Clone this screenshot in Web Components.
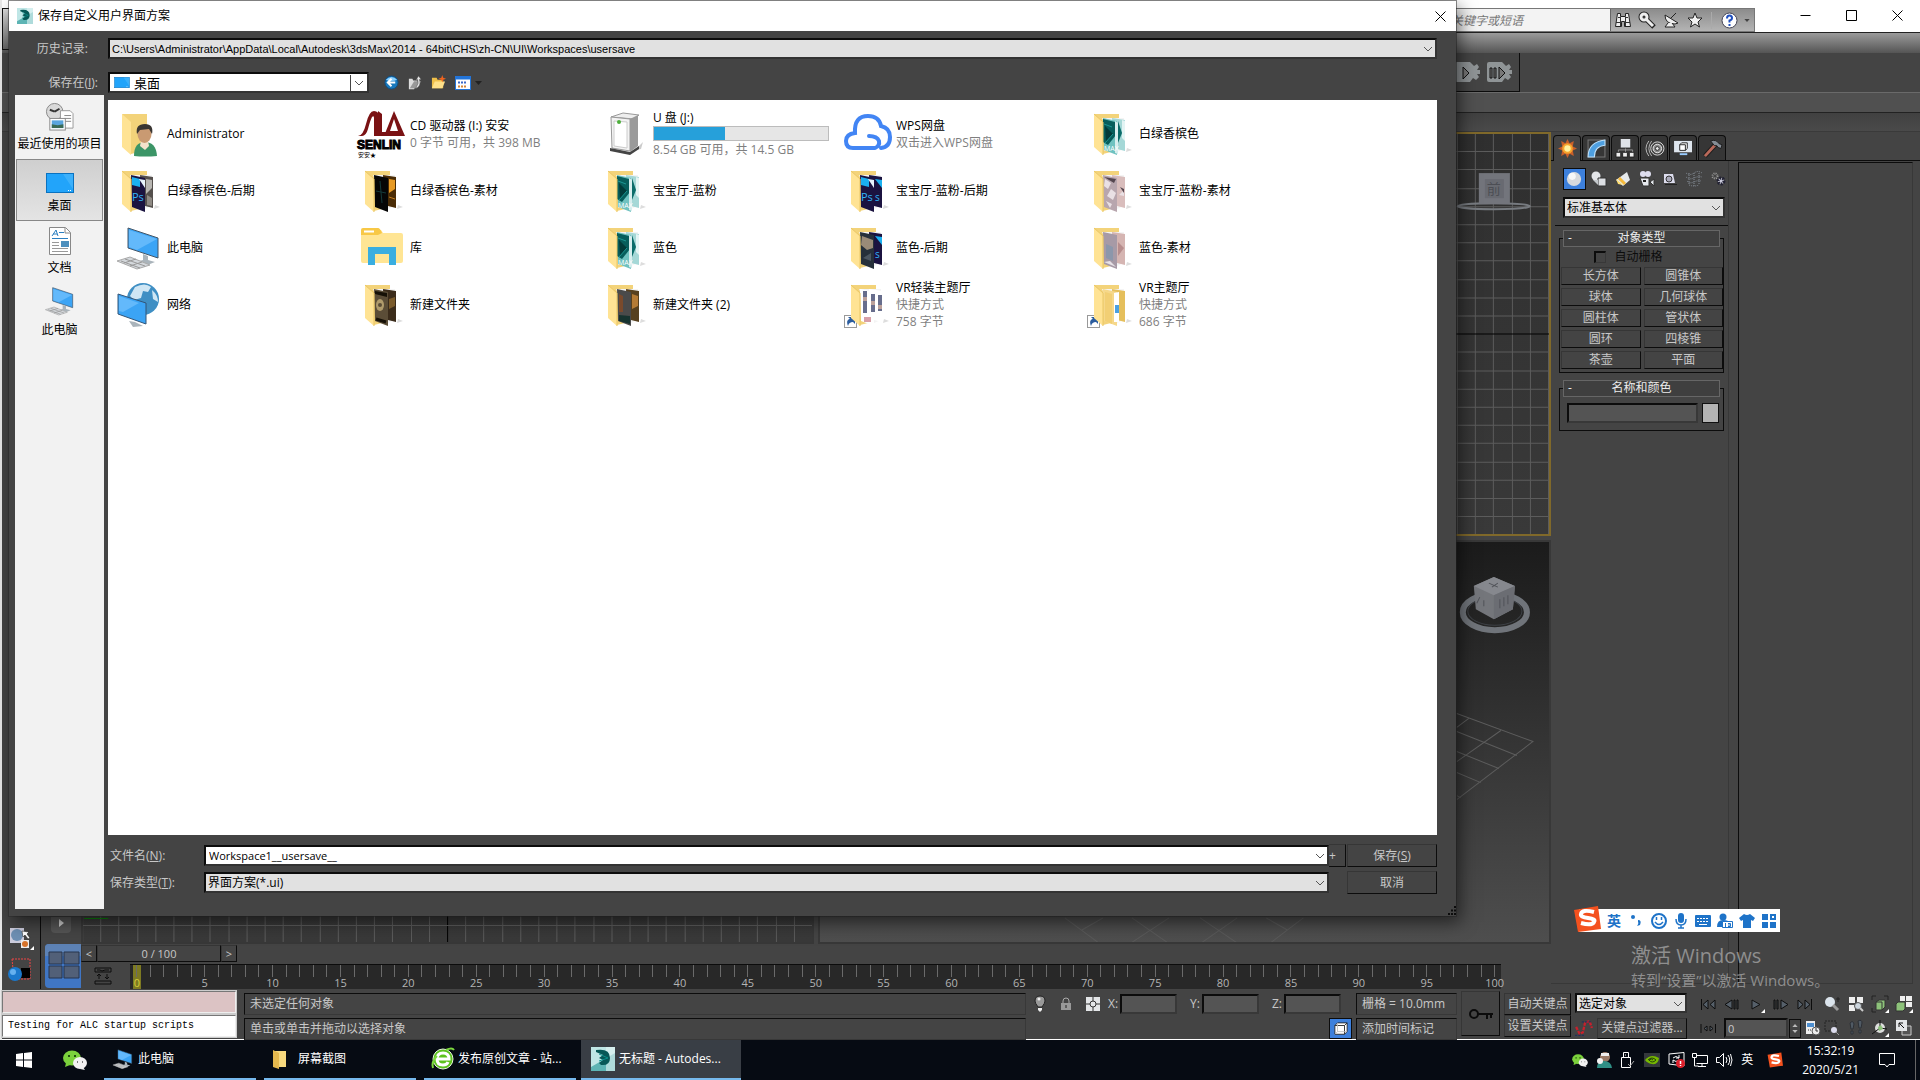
<!DOCTYPE html>
<html lang="zh-CN">
<head>
<meta charset="utf-8">
<title>保存自定义用户界面方案</title>
<style>
  html, body { margin: 0; height: 100%; }
  body {
    font: 12px/16px "Open Sans", "Noto Sans CJK SC", sans-serif;
    color: #c8c8c8; background: #444; overflow: hidden;
  }
</style>
</head>
<body>
<desk-top></desk-top>

<script>
// ---------------------------------------------------------------- icons
/** A folder with two sheets; `front` and `back` are fills, `extra` is drawn on the sheets. */
function folder(front, back, extra = '') {
  return [48, 48, `<path d="M7 4H32V40L16 44Z" fill="#f3d37a"/>
    <path d="M40 38l5 2-6 2z" fill="#ddd"/>
    <path d="M15 8L37 8V39L30 42Z" fill="#f4f4f4"/>
    <path d="M25 8L38 10V41L26 38Z" fill="${back}"/>
    <path d="M16 8L30 11V45L17 40Z" fill="${front}"/>${extra}
    <path d="M7 4L16 12V45L7 37Z" fill="#ffe394"/>
    <path d="M7 4L16 12V45" fill="none" stroke="#eac767"/>`];
}
const maxSheets = folder('#6fc2c0', '#a5d8d7', `<path d="M16 9l12 3 1 13-8 10-5-3z" fill="#075e5c"/>
  <path d="M31 11l4 12-4 10z" fill="#0b6c6a"/><path d="M18 16l8 8-7 8z" fill="#023b3a"/><path d="M17 14l8 3M18 33l8-9" stroke="#1d9794"/>
  <path d="M28 11l3 2v31l-3-1z" fill="#d7eeee"/><path d="M35 10l3 1v20l-3-3z" fill="#e3f4f4"/>
  <text x="17" y="41" font-size="7" fill="#fff" font-family="Open Sans">MAX</text>`);
const psText = `<path d="M17 10l8 2v8l-8-2z" fill="#1bb0f0"/><path d="M24 12l6 1v8z" fill="#e8f4fb"/>
  <text x="17" y="34" font-size="11" fill="#31b6f7" font-family="Open Sans">Ps</text>`;
const shortcut = `<rect x="0.5" y="34.500" width="12" height="12" fill="#fff" stroke="#999"/>
  <path d="M4 45c-2-5 0-7 2-7l-2-2h7v7l-2-2c-3 0-4 1-5 4z" fill="#2b5c9e"/>`;
const monitor = `<path d="M13 4l30 10v20l-30-10z" fill="#3ba4f5" stroke="#456"/><path d="M14 6l28 9-20 11-8-3z" fill="#63b9fb"/>
  <path d="M28 30l5 2v4l7 2-10 4-10-4 8-2z" fill="#aab4bb"/>
  <path d="M2 37l13-4 20 8-13 4z" fill="#d4d8dc" stroke="#aaa"/><path d="M6 37l19 7M10 35l20 7M9 39l12-4M15 42l12-4" stroke="#999"/>`;
const gear = '<path d="M2 2h13l4 4 3-2 2 3-2 3h3v4h-3l2 3-3 3-3-2-3 4H2q-2 0-2-2V4q0-2 2-2z" fill="#8f9496"/>';

const ICONS = {
  max: [24, 24, `<rect width="24" height="24" fill="#5db4b4"/><path d="M0 0h24v6L0 20z" fill="#bfe6e6"/><path d="M15 0h9v24h-9z" fill="#e4f5f5" opacity=".6"/>
    <path d="M5 3q14-2 14 8 0 8-9 7l-2-2 4-3-4-2 4-3-7-3z" fill="#075857"/><path d="M8 7l9 4-9 3" stroke="#0b8e8a" fill="none"/>`],
  close: [11, 11, '<path d="M.5.5l10 10M10.500.5l-10 10" stroke="currentColor" fill="none"/>'],
  min: [11, 11, '<path d="M.5 5.500h10" stroke="currentColor"/>'],
  box: [11, 11, '<path d="M.5.5h10v10H.5z" stroke="currentColor" fill="none"/>'],
  chev: [10, 6, '<path d="M1 1l4 4 4-4" stroke="#555" fill="none"/>'],
  desktop: [28, 20, '<rect x=".5" y=".5" width="27" height="19" fill="#22a4fa" stroke="#0a72c0"/><path d="M17 1h10v15z" fill="#4db9fc" opacity=".6"/><path d="M22 17.500h4" stroke="#fff" stroke-dasharray="1 1"/>'],
  recent: [30, 30, `<circle cx="10" cy="10" r="8.500" fill="#d9d9d9" stroke="#888"/><path d="M10 10l5-3M10 10l-5-2" stroke="#333" stroke-width="2"/>
    <path d="M16 9h10l3 3v15H16z" fill="#fff" stroke="#999"/><path d="M20 14h7M20 17h7M20 20h7" stroke="#888"/>
    <rect x="5" y="17" width="16" height="12" fill="#fff" stroke="#888"/><rect x="7" y="19" width="12" height="8" fill="#5aa5dd"/><path d="M7 27v-4l6 1 6-1v4z" fill="#3b6b55"/>`],
  docs: [24, 28, `<path d="M1.500.5h16l5 5v22h-21z" fill="#fff" stroke="#888"/><path d="M17 1v5h5" fill="none" stroke="#888"/>
    <path d="M4 9l4-6 2 6M5 7h4M11 5.500h5M4 11.500h16" stroke="#2a7ec0" fill="none"/><path d="M4 15.500h7M4 18.500h7M4 21.500h16M4 24.500h16" stroke="#999"/><rect x="13" y="14" width="8" height="6" fill="#4d8fbd"/>`],
  pc: [48, 48, monitor],
  back: [16, 16, '<circle cx="8" cy="8" r="7" fill="#1879bd" stroke="#114d80"/><path d="M2 5q6-6 12 0-6 3-12 0" fill="#8cd1ff"/><path d="M12 8H5M8 4L4 8l4 4" stroke="#fff" stroke-width="2" fill="none"/>'],
  up: [16, 16, '<path d="M1 3h4l1 2h5l-4 10H1z" fill="#ddd"/><path d="M2 14l5-8h8l-5 8z" fill="#999"/><path d="M9 13q4-4 2-9l-2 1 3-5 3 4h-2q2 6-2 9z" fill="#e8e8e8" stroke="#555" stroke-width=".5"/>'],
  newdir: [16, 16, '<path d="M1 3h5l1 2h6v9H1z" fill="#f0c04a"/><path d="M1 14l3-7h11l-3 7z" fill="#ffe18a"/><path d="M12 0l1 3 3 1-3 1-1 3-1-3-3-1 3-1z" fill="#f2641e"/>'],
  views: [16, 14, '<rect x=".5" y=".5" width="15" height="13" fill="#fff" stroke="#2374d8"/><path d="M1 2h14" stroke="#2374d8" stroke-width="3"/><path d="M3 6.500h2m1 0h2m1 0h2" stroke="#3c68c8" stroke-width="2"/><path d="M3 10.500h2m1 0h2m1 0h2" stroke="#d28436" stroke-width="2"/>'],
  down: [7, 4, '<path d="M0 0h7L3.500 4z" fill="currentColor"/>'],
  user: [48, 48, `<path d="M7 4H32V40L16 44Z" fill="#f3d37a"/><path d="M7 4L16 12V45L7 37Z" fill="#ffe394"/>
    <path d="M19 46q0-14 11-14t12 14q-12 1-23 0z" fill="#3c9567"/><path d="M26 31h7l1 5-4 4-5-4z" fill="#f3e2cb"/><ellipse cx="29.500" cy="24" rx="7" ry="9" fill="#c99a72"/><path d="M22 24q-2-10 8-10 9 0 7 10l-3-5-9 1z" fill="#3a3632"/>`],
  senlin: [48, 48, `<path d="M0 26q5 0 8-12Q11 1 16 1t5 6v19h-5V8q0-3-2-1-2 4-4 12-2 7-6 7z" fill="#7a1214"/><path d="M24 4v18h8v4H20V1z" fill="#7a1214"/><path d="M36 1L47 26H26L36 1zM36 9l-4 12h8z" fill="#7a1214" fill-rule="evenodd"/>
    <text x="-1" y="39" font-size="12" font-weight="900" stroke="#000" fill="#000" font-family="Liberation Sans">SENLIN</text><text x="0" y="47" font-size="6" fill="#000" font-family="Noto Sans CJK SC">安安★</text>`],
  drive: [48, 48, `<path d="M34 40l8-8-2 7z" fill="#ccc"/><path d="M10 7l12-4 16 2-5 4z" fill="#eee" stroke="#999"/><path d="M10 7l19 2v32l-18-3z" fill="#f3f3f3" stroke="#999"/><path d="M29 9l8-4v31l-8 6z" fill="#9a9a9a"/><path d="M13 11l13 1v26l-13-2z" fill="#fff" stroke="#ccc"/><path d="M9 38l20 4 9-6v3l-9 6-20-4z" fill="#444"/><circle cx="18" cy="12" r="2" fill="#4caf3a"/>`],
  wps: [48, 48, `<path d="M31 38H9Q2 38 2 31t9-8Q10 6 24 6q11 0 13 10 9 2 9 11 0 10-9 11M25 26q8 0 10 5 1 5-4 7" fill="none" stroke="#4285f4" stroke-width="4" stroke-linecap="round"/>`],
  maxdir: maxSheets,
  psdir: folder('#1b1340', '#55504d', psText + '<path d="M31 12l6 1v8l-6 6z" fill="#b8b6b2"/><path d="M32 28l5 3v8l-5-1z" fill="#8f8a84"/>'),
  psdir2: folder('#1b1340', '#1b1340', psText + '<path d="M31 12l7 1v8z" fill="#1bb0f0"/><text x="31" y="34" font-size="10" fill="#31b6f7" font-family="Open Sans">s</text>'),
  photops: folder('#26303a', '#1b1340', '<path d="M18 12l11 4v8l-6 2-6-5z" fill="#9a8b78"/><path d="M19 34l8-5v8z" fill="#4b5661"/><path d="M31 12l7 1v8z" fill="#1bb0f0"/><text x="31" y="34" font-size="10" fill="#31b6f7" font-family="Open Sans">s</text>'),
  blackdir: folder('#060606', '#4a2c06', '<path d="M31 12l6 1v9l-6 4z" fill="#e79a24"/><path d="M31 30l6 2" stroke="#c07a1c"/><path d="M18 24l10 2M22 14l2 22" stroke="#143a3a"/>'),
  pinkdir: folder('#b8a6ae', '#d9bdbc', '<path d="M18 12l6 4-3 6-4-3zM24 22l5 4-3 7-6-4zM32 28l5-5v6zM19 34l6 3-2 4z" fill="#e9e0e4"/><path d="M17 10l12 2-2 4zM33 20l4 2v4z" fill="#54464f"/>'),
  pinkdir2: folder('#a79aa6', '#d5b5b2', '<path d="M19 20l7 3v14l-7-3z" fill="#8c97ab"/><path d="M17 38l6-1 6 6z" fill="#e6e1e6"/><path d="M31 18l6 6-6 8z" fill="#b78d8d"/>'),
  browndir: folder('#5b4d37', '#3b2c1b', '<path d="M17 10l12 2v4l-12-3z" fill="#151006"/><ellipse cx="22" cy="24" rx="4" ry="6" fill="#b09b6c"/><circle cx="22" cy="24" r="2" fill="#5b4d37"/><path d="M31 18l6-2v9l-6 3z" fill="#7a5b2c"/><path d="M18 38l10 3" stroke="#151006" stroke-width="3"/>'),
  greydir: folder('#4a4a4a', '#57401f', '<path d="M18 13l4 2v16h-4z" fill="#7a4a2c"/><path d="M31 13l6 2v10l-6 3z" fill="#b57b35"/><path d="M18 34l11 1v8l-11-3z" fill="#16332f"/>'),
  cards: folder('#fff', '#fff', '<path d="M19 10h4v22h-4zM27 13h4v18h-4zM34 14h4v16h-4z" fill="#676d8c"/><path d="M19 16h4v4h-4zM27 20h4v4h-4zM34 24h4v4h-4z" fill="#bba09a"/><path d="M20 36h7v5h-7z" fill="#d8a0a8"/>' + shortcut),
  nested: folder('#f6d88a', '#e5bf5c', '<path d="M27 12l5-1v30h-5z" fill="#fff"/><path d="M28 24h4v8h-4z" fill="#4ba0e0"/><path d="M18 11l7 2v30l-7-3z" fill="#f2cf74"/>' + shortcut),
  lib: [48, 48, '<path d="M3 6h20l2 3h18q2 0 2 2v26q0 2-2 2H5q-2 0-2-2z" fill="#ffe594"/><path d="M3 6q0-2 2-2h15q2 0 4 5l-4 2H3z" fill="#f8c846"/><path d="M10 41V23h28v18h-7V30H17v11z" fill="#3aaee0"/><path d="M6 7.500h10" stroke="#fff" stroke-width="2"/>'],
  net: [48, 48, `<circle cx="28" cy="18" r="16" fill="#3f8fc4"/><path d="M20 6q10-5 16 0l-3 5-5-1-2 7-7 2-4-4zM37 9q6 5 6 12l-5-3z" fill="#cfe6f4"/><path d="M3 13l28 9v21L3 33z" fill="#3ba4f5" stroke="#357"/><path d="M4 15l20 7-16 9-4-1z" fill="#63b9fb"/><path d="M14 40l6 1 8 4-10 1z" fill="#aab4bb"/>`],
  // main window
  binoc: [16, 16, '<path d="M2.500 1.500h3v3h5v-3h3l2 13h-6v-5h-3v5h-6z" fill="#eee" stroke="#222"/><path d="M1 10.500h6M9 10.500h6M3 5.500h3M10 5.500h3M5.500 5v9M10.500 5v9" stroke="#333"/>'],
  key: [16, 16, '<circle cx="5" cy="5" r="3" fill="none" stroke="#222" stroke-width="5"/><path d="M7 7l8 8" stroke="#222" stroke-width="5"/><circle cx="5" cy="5" r="3" fill="none" stroke="#eee" stroke-width="3"/><path d="M7 7l7 7" stroke="#eee" stroke-width="3"/>'],
  dish: [16, 16, '<path d="M2 3q0 9 10 9l3-1z" fill="#eee" stroke="#222"/><path d="M8 6l5-5M5 11l-3 4h10l-3-4" stroke="#222" fill="#eee"/>'],
  star: [16, 16, '<path d="M8 1l2 5h5l-4 4 1.500 5L8 12l-4.500 3L5 10 1 6h5z" fill="#f2f2f2" stroke="#222"/>'],
  help: [17, 17, '<circle cx="8.500" cy="8.500" r="7.500" fill="#fff" stroke="#445"/><path d="M6 6.500q0-3 2.500-3t2.500 2.500q0 2-2.500 2.500v2M8.500 12v2" stroke="#1f4fc0" stroke-width="2" fill="none"/>'],
  render: [24, 24, gear + '<path d="M8 7v12l6-6z" fill="#777" stroke="#111"/>'],
  render2: [24, 24, gear + '<path d="M3 8h2v10H3zM7 8h2v10H7zM12 7v12l6-6z" fill="#777" stroke="#111"/>'],
  create: [18, 18, '<path d="M9 0l2 4 4-2-1 5 4 2-4 2 1 5-4-2-2 4-2-4-4 2 1-5-4-2 4-2-1-5 4 2z" fill="#c9602a"/><circle cx="9" cy="9" r="5" fill="#f6a52c"/><circle cx="9" cy="9" r="3" fill="#fff3a0"/>'],
  modify: [18, 18, '<path d="M1 1h16v16H1z" fill="none" stroke="#777"/><path d="M1 17Q1 3 17 1v5Q7 7 7 17z" fill="#4e9fe0" stroke="#bde0fa"/>'],
  hier: [20, 20, '<path d="M5 0h10v9H5z" fill="#dfe3e8"/><path d="M2.500 14v-2.500h15V14M10 10v4" stroke="#999" fill="none"/><path d="M0 14h5v5H0zM7 14h5v5H7zM14 14h5v5h-5z" fill="#eee" stroke="#222"/>'],
  motion: [20, 18, '<path d="M4 1q-6 8 0 16M7 1q-6 8 0 16" fill="none" stroke="#bbb"/><circle cx="13" cy="9" r="7" fill="#444" stroke="#ddd"/><circle cx="13" cy="9" r="4.500" fill="#888" stroke="#eee"/><circle cx="13" cy="9" r="2" fill="#eee" stroke="#222"/>'],
  display: [20, 18, '<path d="M0 1h19v12H0z" fill="#dfe6ee"/><path d="M6 5h6v6H6zM6 5l2-2h6v6l-2 2" fill="#fff" stroke="#222"/><path d="M6 15h8" stroke="#9cf" stroke-width="2"/>'],
  hammer: [20, 20, '<path d="M2 18L13 6" stroke="#1c1c1c" stroke-width="5"/><path d="M2 18L13 6" stroke="#b9695a" stroke-width="3"/><path d="M8 2q6-2 9 3l3 1-1 4-3-1q-1-3-4-2z" fill="#848c94" stroke="#1c1c1c"/>'],
  sphere: [18, 18, '<circle cx="9" cy="9" r="8" fill="#d7dadd"/><circle cx="7" cy="6" r="4" fill="#fff" opacity=".8"/>'],
  shapes: [16, 16, '<circle cx="5" cy="5" r="4.500" fill="#e4e6e9"/><path d="M7 7h8v8H7z" fill="#dcdfe3" stroke="#333"/><path d="M2 9h5v5z" fill="#c4c8cc"/>'],
  light: [16, 16, '<path d="M1 9L12 1l3 8-7 6z" fill="#e6e9ec"/><path d="M1 8l7 6-5-1z" fill="#ffdf70"/><path d="M4 7l6 6" stroke="#f5b93a" stroke-width="3"/>'],
  camera: [16, 16, '<circle cx="4" cy="3" r="3" fill="#dde"/><circle cx="9" cy="3" r="3" fill="#dde"/><path d="M1 7h9v8H4zM11 11l4-3v7z" fill="#e6e9ee" stroke="#333"/><path d="M4 10h3" stroke="#222" stroke-width="2"/>'],
  helper: [16, 16, '<path d="M2 3h9l2 9H2z" fill="#dde"/><circle cx="7" cy="8" r="3" fill="#aab" stroke="#333"/><path d="M3 13.500h12" stroke="#222"/>'],
  warp: [16, 16, '<path d="M0 2q4 3 8 0t8 0M0 6q4 3 8 1t8-1M1 10q3 3 7 1t7-1M3 14q5 2 10 0M3 2v11M8 2v13M13 2v11" fill="none" stroke="#858d96" stroke-dasharray="1 1"/>'],
  gears: [16, 16, '<circle cx="5" cy="5" r="2.500" fill="none" stroke="#999" stroke-width="2" stroke-dasharray="1 1"/><circle cx="11" cy="10" r="3" fill="#ccd" stroke="#223" stroke-width="3" stroke-dasharray="2 1"/>'],
  // bottom rows
  layout: [36, 44, '<path d="M0 4q0-4 4-4h32v44H4q-4 0-4-4z" fill="#4076c4"/><path d="M0 4q0-4 4-4h32v12H0z" fill="#5d82b5"/><path d="M4 8h13v12H4zM19 8h15v12H19zM4 22h13v12H4zM19 22h15v12H19z" fill="#526078" stroke="#26344c"/>'],
  play: [20, 16, '<path d="M0 0h20v12q0 4-4 4H4q-4 0-4-4z" fill="#555"/><path d="M8 2v8l5-4z" fill="#ccc"/>'],
  selobj: [26, 24, '<path d="M2 1h14v15H2z" fill="#ccd"/><circle cx="9" cy="8" r="6" fill="#6d8fb3"/><path d="M14 4l7 1-2 2 3 4-2 1-3-4-2 2z" fill="#fff" stroke="#111" stroke-width=".5"/><path d="M13 13h8v8h-8z" fill="#eee"/><circle cx="17" cy="17" r="3" fill="#d9742b"/><path d="M26 19v4h-4z" fill="#fff"/>'],
  ball: [26, 24, '<path d="M4 1h18v20H6z" fill="none" stroke="#e44" stroke-dasharray="2 1"/><path d="M13 10h9v10h-9z" fill="#000"/><circle cx="7" cy="16" r="7" fill="#1b78cc"/><circle cx="5" cy="14" r="3" fill="#65b0ef"/>'],
  curve: [18, 18, '<path d="M1 1h16v4H1zM1 14h16v3H1z" fill="none" stroke="#0c0c0c"/><path d="M3 3h3l2 1 3-1h4M5 12V7M3 9l2-2 2 2M13 7v5M11 10l2 2 2-2" fill="none" stroke="#0c0c0c"/>'],
  bulb: [12, 18, '<path d="M6 1q5 0 5 5 0 2-3 6H4Q1 8 1 6q0-5 5-5z" fill="#999" stroke="#222"/><path d="M4 13h4v2l-2 2-2-2z" fill="#eee"/><circle cx="5" cy="4" r="1.500" fill="#eee"/>'],
  lock: [12, 14, '<path d="M3 7V4q0-3 3-3t3 3v3" fill="none" stroke="#aaa"/><path d="M1 6h10v7H1z" fill="#999"/><path d="M6 8v3" stroke="#222"/>'],
  iso: [14, 14, '<path d="M0 0h14v14H0z" fill="#e4e6e8"/><circle cx="7" cy="7" r="3" fill="none" stroke="#333"/><path d="M7 0v4M7 10v4M0 7h4M10 7h4" stroke="#333"/>'],
  cube: [16, 16, '<path d="M1 4l3-3h11v10l-3 3H1z" fill="#fff" stroke="#222"/><path d="M1 4h11v10M12 4l3-3" stroke="#222" fill="none"/><path d="M4 1v10h11M4 11l-3 3" stroke="#bbb" fill="none"/>'],
  bigkey: [24, 12, '<circle cx="5" cy="6" r="4" fill="none" stroke="#0b0b0b" stroke-width="2"/><path d="M9 5h15v2H9zM17 6h2v5h-2zM21 6h2v4h-2z" fill="#0b0b0b"/>'],
  rw: [17, 11, '<path d="M1.500 0v11M8 1L3 5.500 8 10zM15 1l-5 4.500 5 4.500z" fill="#56606a" stroke="#0c0c0c"/>'],
  ff: [17, 11, '<path d="M15.500 0v11M9 1l5 4.500L9 10zM2 1l5 4.500L2 10z" fill="#56606a" stroke="#0c0c0c"/>'],
  prev: [17, 11, '<path d="M8 1L1 5.500 8 10zM10 1v9h1V1zM13 1v9h1V1z" fill="#56606a" stroke="#0c0c0c"/>'],
  next: [17, 11, '<path d="M9 1l7 4.500L9 10zM2 1v9h1V1zM5 1v9h1V1z" fill="#56606a" stroke="#0c0c0c"/>'],
  run: [17, 11, '<path d="M4 1l8 4.500L4 10z" fill="#56606a" stroke="#111"/><path d="M17 10v4h-4z" fill="#fff"/>'],
  keymode: [17, 11, '<path d="M1 1v9M7 3L4 5.500 7 8zM10 3l3 2.500L10 8zM15.500 1v9" fill="#56606a" stroke="#0c0c0c"/>'],
  setkey: [16, 16, '<path d="M1 7l3 6 3-1 2-9 4-1 2 6" fill="none" stroke="#c8202c" stroke-width="2" stroke-dasharray="3 1"/><path d="M6 2.500h9M0 14.500h9" stroke="#24305a" stroke-dasharray="2 1"/>'],
  zoom: [16, 16, '<circle cx="6" cy="6" r="5" fill="#dbe4ec"/><path d="M9 9l5 5" stroke="#999" stroke-width="3"/><path d="M14 1v5M12 3h4" stroke="#222"/>'],
  zoomall: [16, 16, '<path d="M1 1h6v6H1zM9 1h6v6H9zM1 9h6v6H1z" fill="#eee"/><circle cx="10" cy="10" r="3.500" fill="#cdd6de" stroke="#555"/><path d="M12 12l3 3" stroke="#ccc" stroke-width="2"/>'],
  ext: [16, 16, '<path d="M0 4V0h4M12 0h4v4M0 12v4h4" fill="none" stroke="#222"/><path d="M4 6l3-2h6v7l-3 3H4z" fill="#8dc27a" stroke="#333"/><path d="M4 6h6v8" fill="none" stroke="#333"/><path d="M17 13v4h-4z" fill="#fff"/>'],
  extall: [16, 16, '<path d="M4 0h5v5H4zM10 0h6v5h-6zM10 6h6v5h-6z" fill="#eee"/><path d="M0 8l2-2h7v7l-2 2H0z" fill="#8dc27a" stroke="#333"/><path d="M17 13v4h-4z" fill="#fff"/>'],
  timecfg: [16, 16, '<path d="M1 1h9v13H1z" fill="#eee"/><path d="M2 3h7v4H2z" fill="#4e8fd0"/><path d="M3 10h1m1 0h1m1 0h1" stroke="#333"/><circle cx="11" cy="11" r="4" fill="#eee" stroke="#555"/><path d="M11 8v3h2" stroke="#333" fill="none"/>'],
  region: [16, 16, '<path d="M1 1h11v10H1z" fill="none" stroke="#222" stroke-dasharray="2 1"/><circle cx="10" cy="10" r="3" fill="#dde"/><path d="M12 12l3 3" stroke="#999"/>'],
  walk: [16, 16, '<path d="M2 3q3-3 4 1l-1 5H3zM3 11h2v3H3zM10 1q4-2 4 2l-1 5h-2zM11 10h2v3h-2z" fill="#505a64" stroke="#2c3036"/>'],
  orbit: [16, 16, '<circle cx="8" cy="8" r="5" fill="#ddd"/><path d="M8 8V0M8 8l7 1M8 8l-8 6" stroke="#111"/><path d="M6 7l3-2 2 4-4 2z" fill="#8dc27a"/><path d="M17 13v4h-4z" fill="#fff"/>'],
  maximize: [16, 16, '<path d="M6 6h9v9H6z" fill="#555" stroke="#ccc"/><path d="M0 0h11v11H0z" fill="#e4e6e8"/><path d="M3 3l5 5M3 7V3h4" stroke="#111" fill="none"/>'],
  // ime bar and task bar
  sogou: [28, 28, '<path d="M1 5L25 1l3 23L5 27z" fill="#f4511e"/><path d="M21 7q-12-3-13 2-1 3 7 4t6 4q-2 4-13 1" fill="none" stroke="#fff" stroke-width="4"/>'],
  punct: [16, 16, '<circle cx="4" cy="4" r="2" fill="#1e73c8"/><path d="M9 7q4 0 2 5l-3 1q2-3 1-4z" fill="#1e73c8"/>'],
  smile: [16, 16, '<circle cx="8" cy="8" r="7" fill="none" stroke="#1e73c8" stroke-width="2"/><path d="M5.500 4v3M10.500 4v3M4 9q4 5 8 0" fill="none" stroke="#1e73c8" stroke-width="1.500"/>'],
  mic: [16, 16, '<rect x="5" y="0" width="6" height="10" rx="3" fill="#1e73c8"/><path d="M3 6q0 6 5 6t5-6M8 12v3M5 15h6" fill="none" stroke="#1e73c8" stroke-width="1.500"/>'],
  kbd: [16, 16, '<rect x="0" y="2" width="16" height="12" rx="1" fill="#1e73c8"/><path d="M2 5.500h12M2 8.500h12" stroke="#fff" stroke-dasharray="2 1"/><path d="M4 11.500h8" stroke="#fff"/>'],
  person: [16, 16, '<circle cx="6" cy="4" r="3.500" fill="#1e73c8"/><path d="M0 14q0-7 6-7t6 3v4z" fill="#1e73c8"/><path d="M5.500 8.500h10v6h-10z" fill="#fff" stroke="#1e73c8"/><path d="M8.500 10v4M11 10.500h2.500v3H11M11 12h2" stroke="#1e73c8" fill="none"/>'],
  shirt: [16, 16, '<path d="M5 1q3 2 6 0l5 4-2 3-2-1v8H4V7L2 8 0 5z" fill="#1e73c8"/>'],
  tiles: [16, 16, '<path d="M1 1h6v6H1zM1 9h6v6H1zM9 9h6v6H9z" fill="#1e73c8"/><path d="M10 2h4v4h-4z" fill="none" stroke="#1e73c8" stroke-width="2"/>'],
  win: [16, 16, '<path d="M0 2l7-1v6.500H0zM8 1l8-1v7.500H8zM0 8.500h7V15l-7-1zM8 8.500h8V16l-8-1z" fill="#fff"/>'],
  wechat: [24, 20, '<ellipse cx="9" cy="8" rx="9" ry="7.500" fill="#7bd13c"/><path d="M3 13l-1 4 5-2z" fill="#7bd13c"/><ellipse cx="17" cy="13" rx="7" ry="6" fill="#f2f2f2"/><path d="M20 17l2 3-5-1z" fill="#f2f2f2"/><path d="M5 6h2M11 6h2" stroke="#214d10" stroke-width="2"/><path d="M14 12h1M19 12h1" stroke="#555" stroke-width="1.500"/>'],
  taskdir: [16, 20, '<path d="M1 2h13v16H1z" fill="#f7d97e"/><path d="M1 1l6 3v16l-6-2z" fill="#e5b94e"/>'],
  browser: [22, 22, '<circle cx="11" cy="11" r="10" fill="#5dc21e" stroke="#e9f7de"/><path d="M6 11h11q0-6-6-6t-6 6 6 6q4 0 5-3" fill="none" stroke="#fff" stroke-width="3"/><path d="M1 20q-2-6 4-12M14 2q6-3 8 0" stroke="#7cd83e" stroke-width="2" fill="none"/>'],
  fella: [16, 16, '<circle cx="9" cy="5" r="5" fill="#9b7a66"/><path d="M5 1h8v3H5z" fill="#eee"/><path d="M1 16q0-7 7-7t8 7z" fill="#2f8f85"/><circle cx="4" cy="9" r="3" fill="#f3f3f3"/>'],
  usb: [14, 16, '<path d="M3.500.5h5v5h-5zM1.500 5.500h9v10h-9z" fill="none" stroke="#fff"/><path d="M5 3h2" stroke="#fff" stroke-dasharray="1 1"/><path d="M8 12l2 2 4-5" fill="none" stroke="#aaa"/>'],
  nvidia: [16, 14, '<path d="M0 0h16v14H0z" fill="#34393c"/><path d="M1 7q6-7 14-2-1 7-7 6-5-1-7-4z" fill="#76b900"/><path d="M4 7q4-4 8 0-4 4-7 0 3-2 4 0" fill="none" stroke="#24410a"/>'],
  sync: [18, 16, '<path d="M1 2l15-1.500V14L1 12z" fill="none" stroke="#fff"/><path d="M5 6q3-3 6 0M11 3v3H8M11 8q-3 3-6 0v3" stroke="#fff" fill="none"/><circle cx="12.500" cy="11.500" r="4.500" fill="#dc1f2b"/><path d="M12.500 9v3M12.500 13v1" stroke="#fff" stroke-width="1.500"/>'],
  lan: [16, 14, '<path d="M4.500 2.500h11v8h-11M10 10v3M6 13.500h8M.5.5h4v4h-4zM2.500 5v8h4" fill="none" stroke="#fff"/>'],
  sound: [16, 14, '<path d="M.5 4.500h3l4-4v13l-4-4h-3zM10 4q2 3 0 6M12 2q3.500 5 0 10M14.500 1q3 6 0 12" fill="none" stroke="#fff"/>'],
  note: [16, 16, '<path d="M.5 1.500h15v11H10L8 15l-2-2.500H.5z" fill="none" stroke="#fff"/>'],
  grip: [10, 10, '<path d="M8 1h2M5 4.500h2M8 4.500h2M2 8h2M5 8h2M8 8h2" stroke="#0c0c0c" stroke-width="2"/>']
};

const sheet = 'svg{display:block}*{box-sizing:border-box}button,input,select{font:inherit;color:inherit;margin:0;border-radius:0}button{padding:0;border:0;background:none}';

/** Base: puts the class's markup into an open shadow root. */
class Part extends HTMLElement {
  constructor() { super(); this.attachShadow({ mode: 'open' }); }
  connectedCallback() {
    this.shadowRoot.innerHTML = `<style>${sheet}${this.css()}</style>${this.html()}`;
    this.ready?.();
  }
  css() { return ''; }
  html() { return '<slot></slot>'; }
}

/** <ui-icon name size> */
customElements.define('ui-icon', class extends Part {
  css() { return ':host{display:block;flex:none}svg{overflow:visible}'; }
  html() {
    const [w, h, body] = ICONS[this.getAttribute('name')];
    const width = Number(this.getAttribute('size')) || w;
    return `<svg width="${width}" height="${Math.round(h * width / w)}" viewBox="0 0 ${w} ${h}" aria-hidden="true">${body}</svg>`;
  }
});

/** Sunken combo frame round a slotted <select> or <input>. */
customElements.define('max-combo', class extends Part {
  css() {
    return `:host{display:grid;align-items:center;border:2px solid #0c0c0c;border-right-color:#333;border-bottom-color:#333;background:#e1e1e1;color:#000}
      :host([white]){background:#fff}
      ::slotted(select),::slotted(input){grid-area:1/1;width:100%;min-width:0;height:17px;border:0;outline:0;margin:0;padding:0 0 0 2px;background:none;color:#000;font:inherit;appearance:none}
      ::slotted(input){padding-left:3px}
      ::slotted(.lead){padding-left:24px}
      .lead{grid-area:1/1;justify-self:start;margin-left:4px}
      .chev{grid-area:1/1;justify-self:end;pointer-events:none;padding:0 2px}
      :host([split]) .chev{border-left:1px solid #444;padding:5px 3px}`;
  }
  html() {
    const lead = this.getAttribute('icon');
    return `${lead ? `<ui-icon class="lead" name="${lead}" size="16"></ui-icon>` : ''}<slot></slot><ui-icon class="chev" name="chev"></ui-icon>`;
  }
});

/** Flat raised button. */
customElements.define('max-button', class extends Part {
  css() {
    return `:host{display:grid}button{display:flex;align-items:center;justify-content:center;width:100%;height:100%;
      border:1px solid;border-color:#363636 #0c0c0c #0c0c0c #363636;color:#c8c8c8;white-space:nowrap;overflow:hidden}
      :host([start]) button{justify-content:start;border-left:0}`;
  }
  html() {
    const label = this.getAttribute('label');
    return `<button type="button"${label ? ` aria-label="${label}"` : ''}><slot></slot></button>`;
  }
});

// ---------------------------------------------------------------- dialog
const FILES = [
  ['user', 'Administrator'], ['senlin', 'CD 驱动器 (I:) 安安', '0 字节 可用，共 398 MB'], ['drive', 'U 盘 (J:)', '8.54 GB 可用，共 14.5 GB', 41],
  ['wps', 'WPS网盘', '双击进入WPS网盘'], ['maxdir', '白绿香槟色'],
  ['psdir', '白绿香槟色-后期'], ['blackdir', '白绿香槟色-素材'], ['maxdir', '宝宝厅-蓝粉'], ['psdir2', '宝宝厅-蓝粉-后期'], ['pinkdir', '宝宝厅-蓝粉-素材'],
  ['pc', '此电脑'], ['lib', '库'], ['maxdir', '蓝色'], ['photops', '蓝色-后期'], ['pinkdir2', '蓝色-素材'],
  ['net', '网络'], ['browndir', '新建文件夹'], ['greydir', '新建文件夹 (2)'], ['cards', 'VR轻装主题厅', '快捷方式<br>758 字节'], ['nested', 'VR主题厅', '快捷方式<br>686 字节']
];

customElements.define('file-tile', class extends Part {
  css() {
    return `:host{display:flex;align-items:center;gap:4px;height:57px;color:#000}
      div{line-height:17px;white-space:nowrap}small{display:block;font-size:12px;color:#7f7f7f}
      .bar{display:block;width:176px;height:15px;border:1px solid #bcbcbc;background:#e6e6e6}.bar i{display:block;height:13px;background:#26a0da}`;
  }
  html() {
    const { icon, sub, used } = this.dataset;
    return `<ui-icon name="${icon}" size="48"></ui-icon><div><slot></slot>
      ${used ? `<span class="bar"><i style="width:${used}%"></i></span>` : ''}${sub ? `<small>${sub}</small>` : ''}</div>`;
  }
});

customElements.define('place-item', class extends Part {
  css() {
    return `:host{display:grid}button{display:grid;justify-items:center;align-content:end;gap:4px;height:62px;padding-bottom:6px;border:1px solid transparent;color:#000;line-height:17px;white-space:nowrap}
      :host([active]) button{border-color:#888;background:linear-gradient(#cfcfcf,#e4e4e4)}`;
  }
  html() { return `<button type="button"><ui-icon name="${this.dataset.icon}" size="${this.dataset.size}"></ui-icon><slot></slot></button>`; }
});

customElements.define('save-dialog', class extends Part {
  css() {
    return `:host{display:flex;flex-direction:column;background:#444;box-shadow:4px 6px 16px #0008,0 0 0 1px #3338}
      header{display:flex;align-items:center;height:30px;padding:0 8px;gap:5px;background:#fff;color:#000}
      header span{flex:1}header button{padding:2px}
      .row{display:grid;grid-template-columns:89px 1fr;column-gap:10px;align-items:center;padding:0 19px 0 0}
      .row label{justify-self:end}
      .history{margin-top:7px}.history label{margin-right:10px}.history max-combo{font-family:"Liberation Sans",sans-serif;font-size:11px}
      .where{margin-top:13px}
      .where .look{display:flex;align-items:center;gap:9px}.where max-combo{flex:0 1 261px;font-size:13px;margin-right:6px}
      .look{color:#222}
      .look .views{display:flex;align-items:center;gap:4px}
      .body{flex:1;display:grid;grid-template-columns:89px 1fr;column-gap:4px;padding:2px 19px 7px 6px;min-height:0}
      nav{background:#f2f2f2;padding:2px 1px;display:flex;flex-direction:column}
      .main{display:flex;flex-direction:column;padding-top:5px;min-height:0;min-width:0}
      .files{flex:1;background:#fff;display:grid;grid-template-columns:repeat(auto-fill,243px);align-content:start;padding:5px 7px}
      form{display:grid;grid-template-columns:94px 1fr 17px 91px;align-items:center;row-gap:4px;padding:9px 0 15px 2px;margin:0}
      form max-combo{height:21px}form input{font-size:11px}form max-button{height:23px}form .go{margin-left:4px;width:90px;justify-self:end}
      .type{grid-column:2}.go2{grid-column:4}
      footer{height:0;display:flex;justify-content:flex-end;align-items:flex-end}`;
  }
  html() {
    return `<header><ui-icon name="max" size="16"></ui-icon><span>保存自定义用户界面方案</span><button type="button" aria-label="关闭"><ui-icon name="close"></ui-icon></button></header>
      <div class="row history"><label for="history">历史记录:</label><max-combo><select id="history"><option>C:\\Users\\Administrator\\AppData\\Local\\Autodesk\\3dsMax\\2014 - 64bit\\CHS\\zh-CN\\UI\\Workspaces\\usersave</option></select></max-combo></div>
      <div class="row where"><label for="look">保存在(<u>I</u>):</label><div class="look"><max-combo white split icon="desktop"><select id="look" class="lead"><option>桌面</option></select></max-combo>
        <button type="button" aria-label="后退"><ui-icon name="back" size="15"></ui-icon></button><button type="button" aria-label="向上一级"><ui-icon name="up" size="14"></ui-icon></button>
        <button type="button" aria-label="新建文件夹"><ui-icon name="newdir" size="15"></ui-icon></button><button type="button" aria-label="查看" class="views"><ui-icon name="views"></ui-icon><ui-icon name="down"></ui-icon></button></div></div>
      <div class="body"><nav>
        <place-item data-icon="recent" data-size="29">最近使用的项目</place-item><place-item active data-icon="desktop" data-size="28">桌面</place-item>
        <place-item data-icon="docs" data-size="24">文档</place-item><place-item data-icon="pc" data-size="32">此电脑</place-item></nav>
        <div class="main"><section class="files">${FILES.map(([icon, name, sub, used]) =>
          `<file-tile data-icon="${icon}"${sub ? ` data-sub="${sub}"` : ''}${used ? ` data-used="${used}"` : ''}>${name}</file-tile>`).join('')}</section>
        <form><label for="name">文件名(<u>N</u>):</label><max-combo white><input id="name" value="Workspace1__usersave__" autocomplete="off" spellcheck="false"></max-combo>
          <max-button start>+</max-button><max-button class="go">保存(<u>S</u>)</max-button>
          <label for="type">保存类型(<u>T</u>):</label><max-combo class="type"><select id="type"><option>界面方案(*.ui)</option></select></max-combo><max-button class="go go2">取消</max-button></form></div></div>
      <footer><ui-icon name="grip"></ui-icon></footer>`;
  }
});

// ---------------------------------------------------------------- viewports
function gridLines(x0, y0, step, axisX, axisY) {
  let out = '';
  for (let i = -2; i < 42; i++) {
    const x = Math.round(x0 + i * step);
    out += `<path d="M${x + 0.5} 0V403" stroke="${x === axisX ? '#000' : '#5c5c5c'}"/>`;
  }
  for (let i = -2; i < 24; i++) {
    const y = Math.round(y0 + i * step);
    out += `<path d="M0 ${y + 0.5}H733" stroke="${y === axisY ? '#000' : '#5c5c5c'}"/>`;
  }
  return out;
}
const VIEWS = {
  top: gridLines(2, 2, 18.2),
  front: gridLines(0, -1, 18.2, -1, 199) + `<ellipse cx="674" cy="72" rx="36" ry="3" fill="none" stroke="#777b80" stroke-width="2"/>
    <path d="M659 39h31v31h-31z" fill="#73757c"/><path d="M665 45h19v19h-19z" fill="#686a71"/><text x="667" y="60" font-size="14" fill="#4c4e54">前</text>`,
  left: gridLines(1, 0, 18.2, 365) + '<path d="M3 375.500h24" stroke="#0a8a0a"/>',
  persp: `<g transform="translate(-1 -2)"><path d="M638 173l76 28-76 58M638 191l60 24M638 211l42 17M638 232l24 10M638 187l12-9M638 221l44-31M638 255l4 2" fill="none" stroke="#5c5c5c"/>
    <path d="M247 377l34 25M285 377l-21 12M314 377l36 25M351 377l-38 25M382 377l37 25M419 377l-36 25M448 377l21 12M485 377l-33 25" fill="none" stroke="#595959"/>
    <ellipse cx="676" cy="72" rx="32" ry="18" fill="none" stroke="#70747a" stroke-width="6"/><ellipse cx="676" cy="71" rx="27" ry="14" fill="none" stroke="#3d4045"/>
    <path d="M655 46l20-9 21 9-2 23-19 10-18-10z" fill="#74767b"/><path d="M655 46l20-9 21 9-21 9z" fill="#86888e"/><path d="M675 55v24l19-10 2-23z" fill="#6b6d73"/>
    <path d="M670 43l9 4M679 43l-6 4M661 57l-3 6M665 60v6M681 59v9M685 57v9M689 55v9" stroke="#505258" fill="none"/></g>`
};
customElements.define('view-port', class extends Part {
  css() {
    return `:host{display:flex;min-width:0;min-height:0;overflow:hidden;border:2px solid #383838;background:linear-gradient(#2f2f2f,#393939)}
      :host([active]){border-color:#80692a}:host([kind=persp]){background:linear-gradient(#1b1b1b,#4e4e4e)}svg{flex:1;min-width:0}`;
  }
  html() {
    return `<svg viewBox="0 0 729 399" preserveAspectRatio="xMaxYMax slice">${VIEWS[this.getAttribute('kind')]}</svg>`;
  }
});

customElements.define('time-ruler', class extends Part {
  css() {
    return `:host{display:flex;flex:1;height:25px;background:#282828;border-top:1px solid #0c0c0c}
      div{flex:1;min-width:0;display:flex;flex-direction:column;align-items:center;height:24px;font-size:11px;line-height:12px;color:#b4b4b4}
      div::before{content:"";width:1px;height:12px;flex:none;background:#6a6a6a}
      .now{background:linear-gradient(#7d7a22,#7d7a22) center/8px 100% no-repeat}.now span{color:#d4cf3a}`;
  }
  html() {
    return Array.from({ length: 101 }, (_, i) => `<div${i ? '' : ' class="now"'}>${i % 5 ? '' : `<span>${i}</span>`}</div>`).join('');
  }
});

// ---------------------------------------------------------------- command panel
customElements.define('roll-out', class extends Part {
  css() {
    return `:host{display:block;border:1px solid #0c0c0c;margin:0 4px}
      header{margin:-9px 3px 0;height:17px;border:1px solid #666;background:#3f3f3f;color:#ececec;line-height:14px;display:grid;grid-template-columns:12px 1fr 12px;text-align:center}`;
  }
  html() { return `<header><span>-</span><span>${this.dataset.name}</span></header><slot></slot>`; }
});

const SHAPES = ['长方体', '圆锥体', '球体', '几何球体', '圆柱体', '管状体', '圆环', '四棱锥', '茶壶', '平面'];
customElements.define('command-panel', class extends Part {
  css() {
    return `:host{display:flex;flex-direction:column;background:#444}
      .tabs{display:flex;gap:1px;padding:3px 0 0 2px;border-bottom:1px solid #0c0c0c;height:29px}
      .tabs button{width:28px;display:grid;place-items:center;background:#363636;border:1px solid #0c0c0c;border-bottom:0;border-radius:4px 4px 0 0}
      .tabs button:first-child{background:#444;height:26px}
      .cols{flex:1;display:grid;grid-template-columns:178px 1fr;column-gap:9px;padding-right:7px}
      .col{border-right:1px solid #383838;border-bottom:1px solid #383838;margin-bottom:5px;padding:7px 0 0 4px}
      .rest{border-left:1px solid #0c0c0c;border-top:1px solid #0c0c0c;border-right:1px solid #383838;border-bottom:1px solid #383838;margin:1px 0 5px}
      .cats{display:flex;gap:3px;margin:0 0 7px 8px}.cats button{width:21px;height:22px;display:grid;place-items:center}
      .cats button:first-child{width:23px;background:#3d80dc;border:1px solid #0c0c0c}
      max-combo{margin:0 3px 7px 8px;height:21px}
      hr{margin:0 0 12px;border:0;border-top:1px solid #0c0c0c}
      .auto{display:flex;align-items:center;gap:8px;height:20px;justify-content:center;color:#0c0c0c;margin-right:26px}
      .auto input{appearance:none;width:12px;height:12px;border:1px solid #383838;border-top:2px solid #0c0c0c;border-left:2px solid #0c0c0c}
      .shapes{display:grid;grid-template-columns:1fr 1fr;gap:3px;padding:0 0 3px 1px}.shapes max-button{height:18px}
      .name{display:flex;gap:4px;padding:6px 4px 7px 7px}.name input{flex:1;min-width:0;height:20px;background:#545454;border:2px solid #0c0c0c;border-right-color:#383838;border-bottom-color:#383838}
      .name button{width:17px;background:#b4b4b4;border:1px solid #111}.gap{margin-top:15px}`;
  }
  html() {
    const btn = (n, s) => `<button type="button" aria-label="${n}"><ui-icon name="${n}" size="${s}"></ui-icon></button>`;
    return `<div class="tabs">${['create', 'modify', 'hier', 'motion', 'display', 'hammer'].map(n => btn(n, 19)).join('')}</div>
      <div class="cols"><div class="col"><div class="cats">${['sphere', 'shapes', 'light', 'camera', 'helper', 'warp', 'gears'].map(n => btn(n, 16)).join('')}</div>
        <max-combo><select aria-label="类别"><option>标准基本体</option></select></max-combo><hr>
        <roll-out data-name="对象类型"><label class="auto"><input type="checkbox" disabled>自动栅格</label>
          <div class="shapes">${SHAPES.map(s => `<max-button>${s}</max-button>`).join('')}</div></roll-out>
        <roll-out class="gap" data-name="名称和颜色"><div class="name"><input aria-label="名称"><button type="button" aria-label="颜色"></button></div></roll-out>
      </div><div class="rest"></div></div>`;
  }
});

// ---------------------------------------------------------------- main window
customElements.define('status-bar', class extends Part {
  css() {
    return `:host{display:grid;grid-template-columns:234px 1fr auto 101px 39px 67px 112px 221px;column-gap:4px;height:51px;padding-right:8px;border-bottom:1px solid #fff}
      .two{display:grid;grid-template-rows:22px 22px;row-gap:3px;padding-top:4px;align-items:stretch}
      .listen{row-gap:2px;padding-top:2px;color:#000;font:10px/20px "Liberation Mono",monospace}
      .listen input{width:100%;border:1px solid #777;border-right-color:#eee;border-bottom-color:#eee;outline:1px solid #ccc;background:#fff;padding:0 5px}.listen .pink{background:#dcc3c4}
      .box{border:1px solid #0c0c0c;border-right-color:#383838;border-bottom-color:#383838;padding:0 5px;line-height:20px;white-space:nowrap;overflow:hidden}
      .prompt{margin-left:4px}
      .xyz{display:flex;align-items:center;gap:13px;padding-right:11px}
      .xyz label{display:flex;align-items:center;justify-content:space-between;width:69px}.xyz input{width:57px;height:20px;background:#545454;border:2px solid #0c0c0c;border-right-color:#383838;border-bottom-color:#383838}
      .modes{display:flex;align-items:center;gap:6px;margin-right:-9px}.modes ui-icon{padding:0 4px}
      .tag{justify-self:end;width:23px;height:21px;display:grid;place-items:center;background:#3d80dc;border:1px solid #0c0c0c}
      .key{margin:2px 0 4px}.auto{row-gap:0}
      .low{row-gap:2px}
      max-combo{height:20px}.filter{display:flex;gap:4px;align-items:center}.filter max-button{flex:1;height:21px;min-width:0}
      .play{padding-left:9px}.line,.group{display:flex;align-items:center;justify-content:space-between}
      .group{gap:7px}.view{gap:8px}.frame{display:flex;align-items:center;gap:1px}
      .frame input{width:64px;height:20px;background:#545454;border:2px solid #0c0c0c;border-right-color:#383838;border-bottom-color:#383838;padding:0 2px;font-size:11px}
      .spin{display:grid;gap:3px;border:1px solid #0c0c0c;padding:4px 2px;color:#bbb}.spin ui-icon:first-child{rotate:180deg}`;
  }
  html() {
    const ic = (n, s) => `<button type="button" aria-label="${n}"><ui-icon name="${n}" size="${s || 0}"></ui-icon></button>`;
    return `<div class="two listen"><input class="pink" aria-label="宏录制器" readonly><input aria-label="侦听器" readonly value="Testing for ALC startup scripts"></div>
      <div class="two prompt"><div class="box">未选定任何对象</div><div class="box">单击或单击并拖动以选择对象</div></div>
      <div class="two"><div class="xyz"><div class="modes">${['bulb', 'lock', 'iso'].map(n => `<ui-icon name="${n}"></ui-icon>`).join('')}</div>
        <label>X:<input></label><label>Y:<input></label><label>Z:<input></label></div><button type="button" class="tag" aria-label="自适应降级"><ui-icon name="cube" size="14"></ui-icon></button></div>
      <div class="two"><div class="box">栅格 = 10.0mm</div><div class="box">添加时间标记</div></div>
      <max-button class="key" label="设置关键点"><ui-icon name="bigkey"></ui-icon></max-button>
      <div class="two auto"><max-button>自动关键点</max-button><max-button>设置关键点</max-button></div>
      <div class="two low"><max-combo><select aria-label="选择集"><option>选定对象</option></select></max-combo><div class="filter">${ic('setkey', 18)}<max-button>关键点过滤器...</max-button></div></div>
      <div class="two low play">
        <div class="line"><div class="group">${['rw', 'prev', 'run', 'next', 'ff'].map(n => ic(n)).join('')}</div>
          <div class="group view">${['zoom', 'zoomall', 'ext', 'extall'].map(n => ic(n)).join('')}</div></div>
        <div class="line"><div class="group">${ic('keymode')}<div class="frame"><input aria-label="当前帧" value="0"><div class="spin"><ui-icon name="down" size="6"></ui-icon><ui-icon name="down" size="6"></ui-icon></div></div></div>
          ${ic('timecfg')}<div class="group view">${['region', 'walk', 'orbit', 'maximize'].map(n => ic(n)).join('')}</div></div></div>`;
  }
});

customElements.define('max-window', class extends Part {
  css() {
    return `:host{display:flex;flex-direction:column;isolation:isolate;border-left:2px solid #e8e8e8;background:#444}
      .title{display:flex;justify-content:flex-end;align-items:flex-end;height:32px;background:#fff}
      .app{position:relative;z-index:1;align-self:flex-start;margin:8px auto 0 0;width:44px;height:42px;border:1px solid #111;background:linear-gradient(#ddd,#666)}
      .app ui-icon{margin:8px}
      .info{display:flex;align-items:center;height:24px;border:1px solid #777;background:linear-gradient(#8c8c8c,#b4b4b4);margin-right:27px}
      .info input{width:166px;height:22px;border:0;border-right:1px solid #666;background:#f3f3f3;padding:0 0 0 6px;font-size:12px}
      .info input::placeholder{font-style:italic;color:#777;opacity:1}
      .info button{margin:0 4px;color:#444}.info .help{border-left:1px solid #aaa;padding-left:9px}.info .help+button{margin-left:2px}
      .win{display:flex;color:#000;align-self:stretch;padding-bottom:2px}.win button{width:46px;display:grid;place-items:center}
      .menu{height:21px;background:linear-gradient(#9b9b9b,#555);border-top:1px solid #222}
      .tools{height:39px;display:flex;justify-content:flex-end}
      .tools div{display:flex;align-items:center;gap:8px;border:1px solid #0c0c0c;border-top:0;margin-right:400px;width:80px;padding-left:14px}
      .ribbon{height:21px;background:#505050;border-top:1px solid #6a6a6a;border-bottom:1px solid #222}
      .sub{height:19px;background:linear-gradient(#414141,#4a4a4a);border-bottom:1px solid #3a3a3a}
      .main{flex:1;display:grid;grid-template-columns:39px 40px 1fr 369px;min-height:0}
      .strip,.tabs{display:flex;flex-direction:column;align-items:center;justify-content:flex-end;gap:7px;padding-bottom:7px}
      .strip{border-right:1px solid #0c0c0c}.tabs{padding:0 0 1px;align-items:flex-end;gap:11px}.tabs ui-icon:first-child{margin-right:10px}
      .center{display:flex;flex-direction:column;min-width:0}
      .views{flex:1;display:grid;grid-template:1fr 1fr/1fr 1fr;gap:4px;min-height:0}
      .slide{display:flex;height:19px;margin-top:1px;font-size:11px}.slide max-button{width:16px;height:17px}.slide max-button.thumb{width:124px}
      .ruler{display:flex;padding-right:50px}.ruler ui-icon{padding:3px 18px 0 13px;width:49px}`;
  }
  html() {
    const b = n => `<button type="button" aria-label="${n}"><ui-icon name="${n}"></ui-icon></button>`;
    return `<div class="title"><button type="button" class="app" aria-label="应用程序"><ui-icon name="max"></ui-icon></button><div class="info"><input placeholder="关键字或短语" aria-label="搜索">${['binoc', 'key', 'dish', 'star'].map(b).join('')}<button type="button" class="help" aria-label="帮助"><ui-icon name="help"></ui-icon></button><button type="button" aria-label="更多"><ui-icon name="down" size="6"></ui-icon></button></div>
        <div class="win">${['min', 'box', 'close'].map(b).join('')}</div></div>
      <div class="menu"></div><div class="tools"><div>${b('render')}${b('render2')}</div></div><div class="ribbon"></div><div class="sub"></div>
      <div class="main"><div class="strip"><ui-icon name="selobj"></ui-icon><ui-icon name="ball"></ui-icon></div>
        <div class="tabs"><ui-icon name="play"></ui-icon><ui-icon name="layout"></ui-icon></div>
        <div class="center"><div class="views"><view-port kind="top"></view-port><view-port kind="front" active></view-port><view-port kind="left"></view-port><view-port kind="persp"></view-port></div>
          <div class="slide"><max-button>&lt;</max-button><max-button class="thumb">0 / 100</max-button><max-button>&gt;</max-button></div>
          <div class="ruler"><ui-icon name="curve"></ui-icon><time-ruler></time-ruler></div></div>
        <command-panel></command-panel></div>
      <status-bar></status-bar>`;
  }
});

// ---------------------------------------------------------------- desktop
customElements.define('ime-bar', class extends Part {
  css() { return ':host{display:flex;align-items:center;gap:6px;height:23px;padding-right:3px;background:#fff;color:#1e73c8;font-weight:700;font-size:14px}ui-icon:first-of-type{margin:-3px 0 0 -6px}span{margin-right:2px}'; }
  html() { return `<ui-icon name="sogou"></ui-icon><span>英</span>${['punct', 'smile', 'mic', 'kbd', 'person', 'shirt', 'tiles'].map(n => `<ui-icon name="${n}"></ui-icon>`).join('')}`; }
});

customElements.define('task-bar', class extends Part {
  css() {
    return `:host{display:flex;align-items:stretch;height:40px;background:#060b13;color:#fff}
      button{display:flex;align-items:center;flex:none;white-space:nowrap}
      .start{padding:0 16px}.chat{padding:0 15px}
      .task{width:152px;margin-right:8px;padding-left:8px;gap:4px;border-bottom:2px solid #76b9ed}.task.pc{margin-left:2px}.task.dir{gap:10px}
      .task.on{width:160px;background:#393e45;margin-left:-3px;padding-left:10px}
      .tray{margin-left:auto;display:flex;align-items:center}.tray ui-icon{width:16px;margin-right:8px}
      .tray .ime{margin:0 14px 0 1px}
      time{text-align:center;line-height:19px;margin:0 20px 0 11px}.tray .note{margin-right:20px}.edge{width:5px;align-self:stretch;border-left:1px solid #666}`;
  }
  html() {
    return `<button type="button" class="start" aria-label="开始"><ui-icon name="win"></ui-icon></button><button type="button" class="chat" aria-label="微信"><ui-icon name="wechat"></ui-icon></button>
      <button type="button" class="task pc"><ui-icon name="pc" size="22"></ui-icon>此电脑</button><button type="button" class="task dir"><ui-icon name="taskdir"></ui-icon>屏幕截图</button>
      <button type="button" class="task"><ui-icon name="browser"></ui-icon>发布原创文章 - 站...</button><button type="button" class="task on"><ui-icon name="max"></ui-icon>无标题 - Autodes...</button>
      <div class="tray"><ui-icon name="wechat" size="16"></ui-icon>${['fella', 'usb', 'nvidia', 'sync', 'lan', 'sound'].map(n => `<ui-icon name="${n}"></ui-icon>`).join('')}
        <span class="ime">英</span><ui-icon name="sogou" size="16"></ui-icon><time>15:32:19<br>2020/5/21</time><ui-icon class="note" name="note"></ui-icon><div class="edge"></div></div>`;
  }
});

customElements.define('desk-top', class extends Part {
  css() {
    return `:host{display:flex;flex-direction:column;height:100vh;position:relative}
      max-window{flex:1;min-height:0}
      save-dialog{position:absolute;inset:1px 464px 164px 9px}
      ime-bar{position:absolute;right:140px;bottom:148px}
      .mark{position:absolute;right:92px;bottom:88px;width:197px;color:#8f8f8f;font-size:15px;line-height:24px;white-space:nowrap}.mark b{display:block;font-weight:400;font-size:20px}`;
  }
  html() {
    return `<max-window></max-window><save-dialog></save-dialog><ime-bar></ime-bar>
      <div class="mark"><b>激活 Windows</b>转到“设置”以激活 Windows。</div><task-bar></task-bar>`;
  }
  ready() {
    const name = this.shadowRoot.querySelector('save-dialog').shadowRoot.querySelector('#name');
    name.focus();
    name.setSelectionRange(name.value.length, name.value.length);
  }
});
</script>
</body>
</html>
